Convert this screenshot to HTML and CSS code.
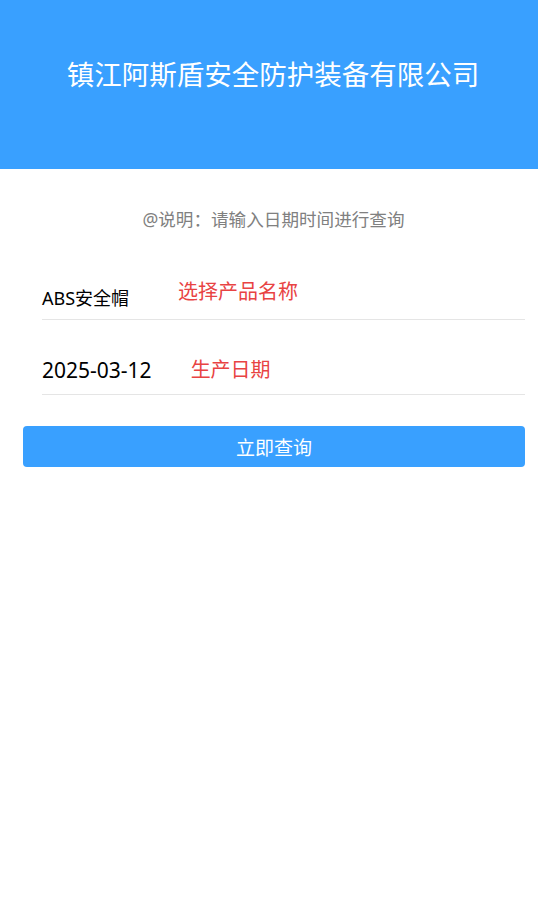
FILE: index.html
```html
<!DOCTYPE html>
<html>
<head>
    <title>产品查询</title>
    <meta http-equiv="Content-Type" content="text/html; charset=utf-8" />
    <link rel="stylesheet" href="styles.css">
</head>

<body>
    <div class="header">
        <h1>镇江阿斯盾安全防护装备有限公司</h1>
    </div>

    <p class="note">@说明：请输入日期时间进行查询</p>

    <form class="query-form" method="post" action="#">
        <div class="field field-product">
            <span class="field-label">ABS安全帽</span>
            <span class="field-hint hint-product">选择产品名称</span>
        </div>
        <div class="field field-date">
            <span class="field-value">2025-03-12</span>
            <span class="field-hint">生产日期</span>
        </div>
        <button type="submit" class="btn-submit">立即查询</button>
    </form>
</body>
</html>
```

FILE: styles.css
```css
body {
    margin: 0;
    font-family: "Noto Sans", "Noto Sans CJK SC", sans-serif;
    background-color: #fff;
    color: #000;
}
.header {
    height: 169px;
    box-sizing: border-box;
    padding-top: 55px;
    background-color: #39a0ff;
}
.header h1 {
    margin: 0;
    padding-left: 8px;
    text-align: center;
    font-size: 27.5px;
    font-weight: normal;
    line-height: 40px;
    color: #fff;
}
.note {
    margin: 36px 0 0;
    padding-left: 9px;
    text-align: center;
    font-size: 17.6px;
    line-height: 28px;
    color: #808080;
}
.query-form {
    margin-top: 14px;
    padding: 0 13px 0 23px;
}
.field {
    display: flex;
    align-items: flex-end;
    height: 75px;
    box-sizing: border-box;
    margin-left: 19px;
    border-bottom: 1px solid #e5e5e5;
}
.field-product {
    height: 73px;
    padding-bottom: 9px;
}
.field-date {
    padding-bottom: 12px;
}
.field-label {
    width: 136px;
    font-size: 18px;
    line-height: 24px;
}
.field-value {
    margin-right: 39px;
    font-size: 21px;
    line-height: 24px;
}
.field-hint {
    font-size: 20px;
    line-height: 24px;
    color: #e84343;
}
.hint-product {
    margin-bottom: 6px;
}
.btn-submit {
    display: block;
    width: 100%;
    height: 41px;
    margin-top: 31px;
    border: none;
    border-radius: 4px;
    background-color: #39a0ff;
    color: #fff;
    font-family: inherit;
    font-size: 19px;
    cursor: pointer;
}
```
